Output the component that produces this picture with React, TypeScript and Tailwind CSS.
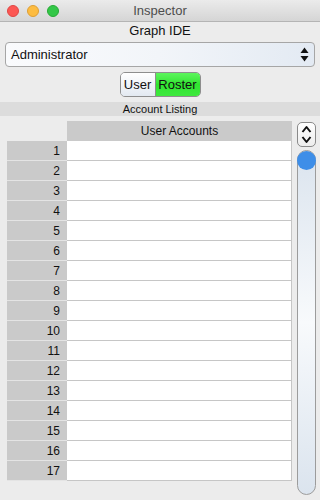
const rows = Array.from({ length: 17 }, (_, i) => i + 1);

function UpDown({ className }: { className?: string }) {
  return (
    <svg width="9" height="15" viewBox="0 0 9 15" className={className}>
      <path d="M4.5 0.5 L8.5 6 L0.5 6 Z" fill="#111" />
      <path d="M4.5 14.5 L8.5 9 L0.5 9 Z" fill="#111" />
    </svg>
  );
}

function Stepper() {
  return (
    <div className="w-[19px] h-[25px] rounded-[5px] border border-[#8a8a8a] bg-gradient-to-b from-white to-[#ededed] flex flex-col items-center justify-center">
      <svg width="11" height="19" viewBox="0 0 11 19">
        <path d="M1.5 7 L5.5 2 L9.5 7" fill="none" stroke="#111" strokeWidth="2" strokeLinejoin="round" />
        <path d="M1.5 12 L5.5 17 L9.5 12" fill="none" stroke="#111" strokeWidth="2" strokeLinejoin="round" />
      </svg>
    </div>
  );
}

export default function App() {
  return (
    <div className="w-[320px] h-[500px] bg-[#ececec] flex flex-col overflow-hidden" style={{ fontFamily: '"Liberation Sans", Arial, sans-serif' }}>
      {/* title bar */}
      <div className="relative h-[22px] shrink-0 bg-gradient-to-b from-[#ebebeb] to-[#d5d5d5] border-b border-[#b4b4b4] flex items-center justify-center">
        <div className="absolute left-[7px] top-[5px] flex gap-[8px]">
          <span className="w-[12px] h-[12px] rounded-full bg-[#fc5753] border border-[#df4744]" />
          <span className="w-[12px] h-[12px] rounded-full bg-[#fdbc40] border border-[#de9f34]" />
          <span className="w-[12px] h-[12px] rounded-full bg-[#33c748] border border-[#27aa35]" />
        </div>
        <span className="text-[13px] text-[#4d4d4d]">Inspector</span>
      </div>

      <div className="h-[16px] mt-[1px] flex items-center justify-center text-[13px] text-[#111]">Graph IDE</div>

      {/* popup */}
      <div className="mx-[5px] mt-[3px] h-[25px] rounded-[4px] border border-[#a6a6a6] bg-gradient-to-r from-[#fafbfd] via-[#f2f5f9] to-[#e3eaf3] flex items-center justify-between pl-[5px] pr-[5px]">
        <span className="text-[13px] text-[#111]">Administrator</span>
        <UpDown />
      </div>

      {/* segmented */}
      <div className="mt-[5px] self-center flex h-[25px] w-[81px] rounded-[5px] border border-[#8e8e8e] overflow-hidden text-[13px] text-[#111]">
        <div className="w-[35px] flex items-center justify-center bg-gradient-to-b from-white to-[#e3e9f1] border-r border-[#8e8e8e]">User</div>
        <div className="flex-1 flex items-center justify-center bg-gradient-to-b from-[#5cf55c] via-[#2fe52f] to-[#3ee83e]">Roster</div>
      </div>

      {/* band */}
      <div className="mt-[5px] h-[14px] bg-[#dcdcdc] flex items-center justify-center text-[11px] text-[#111]">Account Listing</div>

      <div className="flex mt-[5px]">
        {/* table */}
        <div className="ml-[7px] w-[285px]">
          <div className="flex h-[20px]">
            <div className="w-[60px]" />
            <div className="w-[225px] bg-[#cacaca] flex items-center justify-center text-[12px] text-[#111]">User Accounts</div>
          </div>
          {rows.map((n) => (
            <div key={n} className="flex h-[20px]">
              <div className="w-[60px] h-[20px] bg-[#cacaca] flex items-center justify-end pr-[7px] text-[12px] text-[#111] border-b border-[#e4e4e4]">
                {n}
              </div>
              <div className="w-[225px] bg-white border-b border-r border-[#c6c6c6]" />
            </div>
          ))}
        </div>

        {/* scroller */}
        <div className="ml-[5px] flex flex-col">
          <div className="mt-[1px]"><Stepper /></div>
          <div className="relative mt-[3px] w-[19px] h-[345px] rounded-full border border-[#9c9c9c] bg-gradient-to-b from-[#dbe4ee] via-[#f8fafc] to-[#dbe4ee]">
            <div className="absolute left-[-1px] top-[0px] w-[19px] h-[19px] rounded-full bg-[#3e8ee8]" />
          </div>
        </div>
      </div>
    </div>
  );
}
